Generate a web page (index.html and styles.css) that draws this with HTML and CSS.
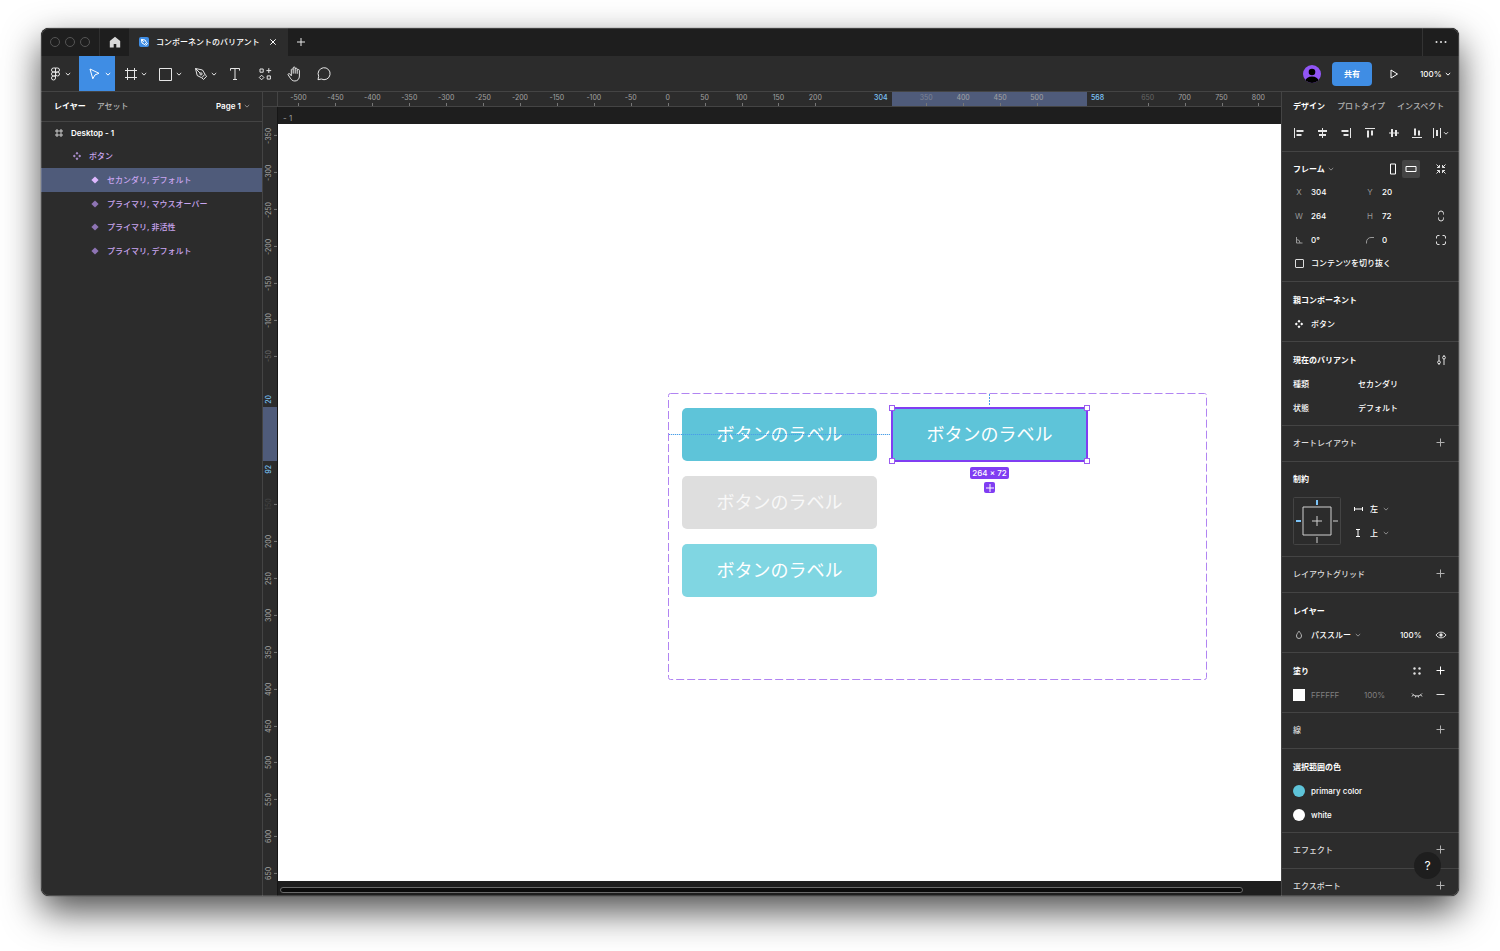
FILE: index.html
```html
<!DOCTYPE html>
<html lang="ja">
<head>
<meta charset="utf-8">
<title>コンポーネントのバリアント</title>
<link rel="stylesheet" href="styles.css">
</head>
<body>
<svg class="sprite" aria-hidden="true">
  <symbol id="chev" viewBox="0 0 6 6"><path d="M.8 2 3 4.1 5.2 2"/></symbol>
  <symbol id="plus" viewBox="0 0 12 12"><path d="M5.500 1.500v8M1.500 5.500h8"/></symbol>
  <symbol id="minus" viewBox="0 0 12 12"><path d="M1.500 5.500h8"/></symbol>
  <symbol id="hash" viewBox="0 0 12 12"><path d="M4 2v8M8 2v8M2 4h8M2 8h8"/></symbol>
  <symbol id="comp" viewBox="0 0 12 12"><path class="solid" d="M6 1.8 7.5 3.3 6 4.8 4.5 3.3zM6 7.2 7.5 8.7 6 10.2 4.5 8.7zM3.3 4.5 4.8 6 3.3 7.5 1.8 6zM8.7 4.5 10.2 6 8.7 7.5 7.2 6z"/></symbol>
  <symbol id="diamond" viewBox="0 0 12 12"><path class="solid" d="M6 2.4 9.6 6 6 9.6 2.4 6z"/></symbol>
</svg>

<main class="window">
  <header class="titlebar">
    <div class="lights"><i></i><i></i><i></i></div>
    <button class="home" aria-label="ホーム"><svg class="icon12" viewBox="0 0 12 12"><path class="solid" d="M6 .8 11.2 5v6.4H7.3V8H4.7v3.4H.8V5z"/></svg></button>
    <div class="doc-tab">
      <svg class="icon10" viewBox="0 0 10 10"><rect class="doc-bg" width="10" height="10" rx="2"/><path d="M2.4 2.4 6 3 7.5 5.6 5.6 7.5 3 6zM2.4 2.4l2.4 2.4M7.5 5.6l1 1-1.8 1.8-1-1"/></svg>
      <span class="doc-name">コンポーネントのバリアント</span>
      <button aria-label="閉じる"><svg class="icon8" viewBox="0 0 8 8"><path d="M1.300 1.300l5.400 5.400M6.700 1.300 1.300 6.700"/></svg></button>
    </div>
    <button class="new-tab" aria-label="新規タブ"><svg class="icon12" viewBox="0 0 12 12"><path d="M6 2v8M2 6h8"/></svg></button>
    <button class="more" aria-label="その他"><svg class="icon12" viewBox="0 0 12 12"><g class="solid"><circle cx="1.5" cy="6" r="1"/><circle cx="6" cy="6" r="1"/><circle cx="10.5" cy="6" r="1"/></g></svg></button>
  </header>

  <nav class="toolbar">
    <button class="tool tool--menu" aria-label="メニュー"><svg class="icon18" viewBox="0 0 18 18"><path d="M9.500 3H7.500a2 2 0 0 0 0 4h2zM9.500 3h2a2 2 0 0 1 0 4h-2zM9.500 7h-2a2 2 0 0 0 0 4h2zM9.500 11h-2a2 2 0 1 0 2 2z"/><circle cx="11.500" cy="9" r="2"/></svg><svg class="chev"><use href="#chev"/></svg></button>
    <button class="tool tool--active" aria-label="移動"><svg class="icon18" viewBox="0 0 18 18"><path d="M4 4 13 8.300 9 9.900 6.800 13.800z"/></svg><svg class="chev"><use href="#chev"/></svg></button>
    <button class="tool" aria-label="フレーム"><svg class="icon18" viewBox="0 0 18 18"><path d="M5.500 3v12M12.500 3v12M3 5.500h12M3 12.500h12"/></svg><svg class="chev"><use href="#chev"/></svg></button>
    <button class="tool" aria-label="長方形"><svg class="icon18" viewBox="0 0 18 18"><path d="M2.500 3.500h12v12h-12z"/></svg><svg class="chev"><use href="#chev"/></svg></button>
    <button class="tool" aria-label="ペン"><svg class="icon18" viewBox="0 0 18 18"><path d="M3.5 3.5 10.5 5 13 9.2 9.7 12.8 5.2 10.5zM3.5 3.5l4.7 4.7M13 9.6l1.700 1.600-3.200 3.300-1.700-1.700"/><circle cx="9" cy="8.900" r="1.100"/></svg><svg class="chev"><use href="#chev"/></svg></button>
    <button class="tool tool--single" aria-label="テキスト"><svg class="icon18" viewBox="0 0 18 18"><path d="M4.500 5.600V3.500h9v2.100M9 3.500v11M7 14.500h4"/></svg></button>
    <button class="tool tool--single" aria-label="リソース"><svg class="icon18" viewBox="0 0 18 18"><path d="M4 4h3.200v3.200H4zM12.800 3.200V8M10.400 5.600h4.800M11.200 10.900h3.200v3.200h-3.200zM5.600 10.200 7.900 12.500 5.600 14.800 3.300 12.500z"/></svg></button>
    <button class="tool tool--single" aria-label="手のひら"><svg class="icon18" viewBox="0 0 18 18"><path d="M5.300 10V4.600a1 1 0 0 1 1.900 0V3a1 1 0 0 1 2 0v1.200a1 1 0 0 1 2 0v1.400a1.100 1.100 0 0 1 2.200 0V11c0 3-1.900 5-4.500 5-2.400 0-3.500-1.200-4.600-2.900L2.100 9.800c-.4-.9.900-1.700 1.700-.9l1.500 1.900zM7.200 4.600v4M9.200 4.200v4.400M11.200 5.600v3.200"/></svg></button>
    <button class="tool tool--single" aria-label="コメント"><svg class="icon18" viewBox="0 0 18 18"><path d="M2 14.700 2.700 11.300A6 6 0 1 1 5.300 14z"/></svg></button>
    <div class="toolbar-end">
      <svg class="avatar" viewBox="0 0 18 18"><defs><clipPath id="round"><circle cx="9" cy="9" r="9"/></clipPath></defs><g clip-path="url(#round)"><path class="av-bg" d="M0 0h18v18H0z"/><circle cx="9" cy="7" r="3.300"/><ellipse cx="9" cy="16.500" rx="6.800" ry="5"/></g></svg>
      <button class="share">共有</button>
      <button class="play" aria-label="再生"><svg class="icon12" viewBox="0 0 12 12"><path d="M3 2 9.500 6 3 10z"/></svg></button>
      <label class="drop"><select aria-label="ズーム"><option>100%</option></select><svg class="chev"><use href="#chev"/></svg></label>
    </div>
  </nav>

  <div class="workspace">
    <aside class="left">
      <div class="left-head">
        <button class="tab tab--on">レイヤー</button>
        <button class="tab">アセット</button>
        <label class="drop page"><select aria-label="ページ"><option>Page 1</option></select><svg class="chev dim"><use href="#chev"/></svg></label>
      </div>
      <ul class="layers">
        <li class="layer layer--top"><svg class="icon12"><use href="#hash"/></svg>Desktop - 1</li>
        <li class="layer layer--one"><svg class="icon12"><use href="#comp"/></svg>ボタン</li>
        <li class="layer layer--two layer--on"><svg class="icon12"><use href="#diamond"/></svg>セカンダリ, デフォルト</li>
        <li class="layer layer--two"><svg class="icon12"><use href="#diamond"/></svg>プライマリ, マウスオーバー</li>
        <li class="layer layer--two"><svg class="icon12"><use href="#diamond"/></svg>プライマリ, 非活性</li>
        <li class="layer layer--two"><svg class="icon12"><use href="#diamond"/></svg>プライマリ, デフォルト</li>
      </ul>
    </aside>

    <section class="stage">
      <div class="corner"></div>
      <div class="ruler-x">
        <span class="range-x"></span>
        <b class="mark mark--l">304</b><b class="mark mark--r">568</b>
        <span>-500</span><span>-450</span><span>-400</span><span>-350</span><span>-300</span><span>-250</span><span>-200</span><span>-150</span><span>-100</span><span>-50</span><span>0</span><span>50</span><span>100</span><span>150</span><span>200</span><span class="off"></span><span class="off"></span><span class="over">350</span><span>400</span><span>450</span><span>500</span><span class="off"></span><span class="off"></span><span class="faint">650</span><span>700</span><span>750</span><span>800</span>
      </div>
      <div class="ruler-y">
        <span class="range-y"></span>
        <b class="mark mark--t">20</b><b class="mark mark--b">92</b>
        <span>-350</span><span>-300</span><span>-250</span><span>-200</span><span>-150</span><span>-100</span><span class="faint">-50</span><span class="off"></span><span class="off"></span><span class="off"></span><span class="ghost">150</span><span>200</span><span>250</span><span>300</span><span>350</span><span>400</span><span>450</span><span>500</span><span>550</span><span>600</span><span>650</span>
      </div>
      <div class="canvas">
        <div class="frame-name">- 1</div>
        <div class="artboard">
          <svg class="set"><rect x=".5" y=".5" width="538" height="286" rx="2"/></svg>
          <div class="node node--a">ボタンのラベル</div>
          <div class="node node--b">ボタンのラベル</div>
          <div class="node node--c">ボタンのラベル</div>
          <div class="node node--d">ボタンのラベル<i class="grip grip--1"></i><i class="grip grip--2"></i><i class="grip grip--3"></i><i class="grip grip--4"></i></div>
          <i class="guide guide--h"></i><i class="guide guide--v"></i>
          <span class="size">264 × 72</span>
          <button class="add" aria-label="バリアントを追加"><svg class="icon12" viewBox="0 0 12 12"><path d="M6 2v8M2 6h8"/></svg></button>
        </div>
        <div class="scroll"><i></i></div>
      </div>
    </section>

    <aside class="right">
      <div class="head">
        <div class="tabs"><button class="tab tab--on">デザイン</button><button class="tab">プロトタイプ</button><button class="tab">インスペクト</button></div>
        <div class="aligns">
          <button aria-label="左揃え"><svg class="icon12" viewBox="0 0 12 12"><path d="M1.500 1v10"/><path class="thick" d="M3.500 4h7M3.500 8h5"/></svg></button>
          <button aria-label="水平中央"><svg class="icon12" viewBox="0 0 12 12"><path d="M5.500 1v10"/><path class="thick" d="M1 4h9M2 8h7"/></svg></button>
          <button aria-label="右揃え"><svg class="icon12" viewBox="0 0 12 12"><path d="M10.500 1v10"/><path class="thick" d="M1.500 4h7M3.500 8h5"/></svg></button>
          <button aria-label="上揃え"><svg class="icon12" viewBox="0 0 12 12"><path d="M1 1.500h10"/><path class="thick" d="M4 3.500v7M8 3.500v5"/></svg></button>
          <button aria-label="垂直中央"><svg class="icon12" viewBox="0 0 12 12"><path d="M1 6h10"/><path class="thick" d="M4 2v8M8 3v6"/></svg></button>
          <button aria-label="下揃え"><svg class="icon12" viewBox="0 0 12 12"><path d="M1 10.500h10"/><path class="thick" d="M4 1.500v7M8 3.500v5"/></svg></button>
          <button aria-label="等間隔"><svg class="icon18" viewBox="0 0 18 18"><path d="M1.500 4v10M8.500 4v10M12 8.200l2 2 2-2"/><path class="thick" d="M5 6v6"/></svg></button>
        </div>
      </div>

      <div class="sec sec--frame">
        <div class="row"><label class="drop title"><select aria-label="種類"><option>フレーム</option></select><svg class="chev dim"><use href="#chev"/></svg></label>
          <span class="orient"><button aria-label="縦"><svg class="icon12" viewBox="0 0 12 12"><path d="M3.500 1h5v10h-5z"/></svg></button><button class="pressed" aria-label="横"><svg class="icon12" viewBox="0 0 12 12"><path d="M1 3.500h10v5H1z"/></svg></button></span>
          <button class="end" aria-label="サイズを合わせる"><svg class="icon12" viewBox="0 0 12 12"><path d="M1.500 1.500 4.500 4.500M4.500 2v2.500H2M10.500 1.500 7.500 4.500M7.500 2v2.500H10M1.500 10.500 4.500 7.500M2 7.500h2.500V10M10.500 10.500 7.500 7.500M10 7.500H7.500V10"/></svg></button></div>
        <div class="row trio"><label class="field"><span>X</span><input value="304"></label><label class="field"><span>Y</span><input value="20"></label></div>
        <div class="row trio"><label class="field"><span>W</span><input value="264"></label><label class="field"><span>H</span><input value="72"></label><button class="end" aria-label="縦横比を固定"><svg class="icon12" viewBox="0 0 12 12"><path d="M3.500 4.500V3.500a2.500 2.500 0 0 1 5 0v1M3.500 7.500v1a2.500 2.500 0 0 0 5 0v-1"/></svg></button></div>
        <div class="row trio"><label class="field" aria-label="回転"><svg class="icon12 grey" viewBox="0 0 12 12"><path d="M3.500 3v6H9.500M3.500 5.500A3.500 3.500 0 0 1 7 9"/></svg><input value="0°"></label><label class="field" aria-label="角の半径"><svg class="icon12 grey" viewBox="0 0 12 12"><path d="M2.500 9.500V8A4.500 4.500 0 0 1 7 3.500h3"/></svg><input value="0"></label><button class="end" aria-label="個別の角"><svg class="icon12" viewBox="0 0 12 12"><path d="M1.500 4.500V3A1.500 1.500 0 0 1 3 1.500h1.500M7.500 1.500H9A1.500 1.500 0 0 1 10.500 3v1.500M10.500 7.500V9A1.500 1.500 0 0 1 9 10.500H7.500M4.500 10.500H3A1.500 1.500 0 0 1 1.500 9V7.500"/></svg></button></div>
        <label class="row check"><input type="checkbox">コンテンツを切り抜く</label>
      </div>

      <div class="sec"><h2 class="row">親コンポーネント</h2><div class="row lead"><svg class="icon12"><use href="#comp"/></svg>ボタン</div></div>

      <div class="sec">
        <div class="row"><h2>現在のバリアント</h2><button class="end" aria-label="バリアント設定"><svg class="icon12" viewBox="0 0 12 12"><path d="M4 1v6M4 9.800V11M9 1v1.200M9 5v6"/><circle cx="4" cy="8.300" r="1.400"/><circle cx="9" cy="3.600" r="1.400"/></svg></button></div>
        <label class="row prop"><span>種類</span><select><option>セカンダリ</option></select></label>
        <label class="row prop"><span>状態</span><select><option>デフォルト</option></select></label>
      </div>

      <div class="sec sec--line"><div class="row"><h2 class="soft">オートレイアウト</h2><button class="end" aria-label="追加"><svg class="icon12"><use href="#plus"/></svg></button></div></div>

      <div class="sec sec--cons">
        <h2 class="row">制約</h2>
        <div class="cons">
          <svg class="cons-box" viewBox="0 0 48 48"><rect class="edge" x=".5" y=".5" width="47" height="47" rx="1"/><path d="M10 10h28v28H10zM24 19v10M19 24h10M24 40v6M40 24h5"/><path class="blue" d="M24 3v5M3 24h5"/></svg>
          <div class="cons-list">
            <label class="drop"><svg class="icon12" viewBox="0 0 12 12"><path d="M1.500 4v4M9.500 4v4M1.500 6h8"/></svg><select aria-label="水平方向"><option>左</option></select><svg class="chev dim"><use href="#chev"/></svg></label>
            <label class="drop"><svg class="icon12" viewBox="0 0 12 12"><path d="M3 2.500h4M3 9.500h4M5 2.500v7"/></svg><select aria-label="垂直方向"><option>上</option></select><svg class="chev dim"><use href="#chev"/></svg></label>
          </div>
        </div>
      </div>

      <div class="sec sec--line"><div class="row"><h2 class="soft">レイアウトグリッド</h2><button class="end" aria-label="追加"><svg class="icon12"><use href="#plus"/></svg></button></div></div>

      <div class="sec"><h2 class="row">レイヤー</h2>
        <div class="row"><label class="drop lead"><svg class="icon12 pale" viewBox="0 0 12 12"><path d="M6 2.200C7.300 4 8.500 5.300 8.500 7a2.500 2.500 0 0 1-5 0C3.500 5.300 4.700 4 6 2.200z"/></svg><select aria-label="合成モード"><option>パススルー</option></select><svg class="chev dim"><use href="#chev"/></svg></label><span class="push"><input class="opacity" aria-label="不透明度" value="100%"><button class="end" aria-label="表示"><svg class="icon12" viewBox="0 0 12 12"><path d="M1 6c2.500-3.800 7.500-3.800 10 0-2.500 3.800-7.500 3.800-10 0z"/><circle class="solid" cx="6" cy="6" r="1.700"/></svg></button></span></div></div>

      <div class="sec">
        <div class="row"><h2>塗り</h2><span class="push"><button class="end" aria-label="スタイル"><svg class="icon12" viewBox="0 0 12 12"><g class="solid"><circle cx="3.500" cy="3.500" r="1.200"/><circle cx="8.500" cy="3.500" r="1.200"/><circle cx="3.500" cy="8.500" r="1.200"/><circle cx="8.500" cy="8.500" r="1.200"/></g></svg></button><button class="end bright" aria-label="追加"><svg class="icon12"><use href="#plus"/></svg></button></span></div>
        <div class="row muted"><span class="paint"><i class="swatch"></i><input aria-label="色" value="FFFFFF"></span><input class="alpha" aria-label="塗りの不透明度" value="100%"><span class="push"><button class="end" aria-label="非表示"><svg class="icon12" viewBox="0 0 12 12"><path d="M1 4.500c2.500 3.300 7.500 3.300 10 0M2.200 6 1 7.500M4.800 7 4.300 8.500M7.200 7l.5 1.500M9.800 6 11 7.500"/></svg></button><button class="end" aria-label="削除"><svg class="icon12"><use href="#minus"/></svg></button></span></div>
      </div>

      <div class="sec sec--line"><div class="row"><h2 class="soft">線</h2><button class="end" aria-label="追加"><svg class="icon12"><use href="#plus"/></svg></button></div></div>

      <div class="sec"><h2 class="row">選択範囲の色</h2>
        <div class="row lead"><i class="swatch swatch--cyan"></i>primary color</div>
        <div class="row lead"><i class="swatch swatch--round"></i>white</div></div>

      <div class="sec sec--line"><div class="row"><h2 class="soft">エフェクト</h2><button class="end" aria-label="追加"><svg class="icon12"><use href="#plus"/></svg></button></div></div>
      <div class="sec sec--line"><div class="row"><h2 class="soft">エクスポート</h2><button class="end" aria-label="追加"><svg class="icon12"><use href="#plus"/></svg></button></div></div>
      <button class="help" aria-label="ヘルプ">?</button>
    </aside>
  </div>
</main>
</body>
</html>
```

FILE: styles.css
```css
* { box-sizing: border-box; }

body {
  margin: 0;
  height: 100vh;
  padding: 28px 41px 55px;
  display: flex;
  background: #fff;
  overflow: hidden;
  color: #fff;
  font: 500 8px/12px Inter, "Noto Sans CJK JP", sans-serif;
}

button, input, select {
  font: inherit;
  color: inherit;
  background: none;
  border: 0;
  padding: 0;
  margin: 0;
  border-radius: 0;
  appearance: none;
  outline: none;
}
button {
  display: flex;
  align-items: center;
  justify-content: center;
  flex: none;
}
h2 { margin: 0; font: inherit; font-weight: 700; }
ul { margin: 0; padding: 0; list-style: none; }

svg { fill: none; stroke: currentColor; stroke-width: 1; flex: none; display: block; }
.sprite { position: absolute; width: 0; height: 0; }
.solid { fill: currentColor; stroke: none; }
.thick { stroke-width: 2; }
.icon8 { width: 8px; height: 8px; }
.icon10 { width: 10px; height: 10px; }
.icon12 { width: 12px; height: 12px; }
.icon18 { width: 18px; height: 18px; }
.chev { width: 6px; height: 6px; }
.dim { color: #8c8c8c; }
.pale { color: #b8b8b8; }
.drop { display: flex; align-items: center; gap: 3px; }

.window {
  flex: 1;
  min-width: 0;
  display: flex;
  flex-direction: column;
  overflow: hidden;
  border-radius: 8px;
  background: #2c2c2c;
  box-shadow: 0 0 1px #000, 0 15px 37px rgba(0, 0, 0, .7);
  position: relative;
}
.window::after {
  content: "";
  position: absolute;
  inset: 0;
  border: 1px solid rgba(255, 255, 255, .16);
  border-radius: 8px;
  pointer-events: none;
}

/* Title bar */
.titlebar { display: flex; height: 28px; flex: none; background: #1e1e1e; color: #e6e6e6; }
.lights { width: 59px; display: flex; align-items: center; gap: 5px; padding-left: 9px; border-right: 1px solid #2f2f2f; }
.lights i { width: 10px; height: 10px; border: 1px solid #555; border-radius: 50%; }
.home { width: 29px; color: #d8d8d8; }
.doc-tab { display: flex; align-items: center; width: 159px; padding: 0 11px 0 10px; background: #2c2c2c; color: #fff; }
.doc-name { margin-left: 7px; flex: 1; white-space: nowrap; }
.doc-bg { fill: #3f8de4; stroke: none; }
.new-tab { width: 26px; color: #e6e6e6; }
.more { width: 37px; margin-left: auto; border-left: 1px solid #333; }

/* Tool bar */
.toolbar { display: flex; height: 36px; flex: none; border-bottom: 1px solid #444; color: #e6e6e6; }
.tool { width: 35px; justify-content: flex-start; padding-left: 7px; gap: 1px; }
.tool--menu { width: 38px; padding-left: 5px; }
.tool--active { width: 36px; background: #3f8de4; color: #fff; }
.tool--single { width: 30px; padding: 0; justify-content: center; }
.toolbar-end { display: flex; align-items: center; margin-left: auto; padding-right: 8px; color: #fff; }
.avatar { width: 18px; height: 18px; fill: #000; stroke: none; margin-right: 11px; }
.av-bg { fill: #9155f5; }
.share { width: 40px; height: 24px; border-radius: 4px; background: #3f8de4; margin-right: 16px; font-weight: 600; }
.play { margin-right: 20px; }

.workspace { flex: 1; min-height: 0; display: flex; }
.tab { color: #b3b3b3; white-space: nowrap; }
.tab--on { color: #fff; font-weight: 700; }

/* Layers */
.left { width: 222px; flex: none; border-right: 1px solid #444; }
.left-head { display: flex; align-items: center; height: 29px; gap: 11px; padding: 0 12px 1px 13px; box-shadow: 0 1px #444; }
.page { margin-left: auto; font-weight: 600; }
.layers { display: grid; grid-auto-rows: 1fr; height: 142px; }
.layer { display: flex; align-items: center; gap: 6px; color: #c9a5f0; }
.layer .icon12 { color: #8e74b4; }
.layer--top { padding-left: 12px; color: #fff; font-weight: 600; }
.layer--top .icon12 { color: #ccc; }
.layer--one { padding-left: 30px; }
.layer--one .icon12 { color: #a78bc9; }
.layer--two { padding-left: 48px; }
.layer--on { background: #4f5b7a; }
.layer--on .icon12 { color: #dfb8ff; }

/* Rulers and canvas */
.stage { flex: 1; min-width: 0; display: grid; grid-template: 15px 1fr / 15px 1fr; }
.corner { border: solid #444; border-width: 0 1px 1px 0; }
.ruler-x, .ruler-y { display: flex; position: relative; font-size: 7px; line-height: 12px; font-weight: 400; color: #a3a3a3; }
.ruler-x { padding: 0 4px 0 2px; border-bottom: 1px solid #444; }
.ruler-x > span:not([class^="range"]) { flex: 1; text-align: center; position: relative; }
.ruler-x > span:not(.off):not(.range-x)::after {
  content: "";
  position: absolute;
  left: 50%;
  bottom: 0;
  width: 1px;
  height: 3px;
  background: #777;
}
.ruler-y { flex-direction: column; padding: 10px 0 4px; border-right: 1px solid #161616; }
.ruler-y > span:not([class^="range"]) {
  flex: 1;
  writing-mode: vertical-rl;
  transform: rotate(180deg);
  text-align: center;
  position: relative;
  padding-left: 3px;
}
.ruler-y > span:not(.off):not(.range-y)::after {
  content: "";
  position: absolute;
  left: 0;
  top: 50%;
  width: 3px;
  height: 1px;
  background: #777;
}
.ruler-x > .faint, .ruler-y > .faint { color: #666; }
.ruler-x > .over { color: #7d8496; }
.ruler-y > .ghost { color: #444; }
.range-x { position: absolute; left: 614px; top: 0; bottom: 0; width: 195px; background: #4f5b7a; }
.range-y { position: absolute; left: 0; right: 0; top: 300px; height: 54px; background: #4f5b7a; }
.mark { position: absolute; color: #7cc4f8; font-weight: 500; }
.mark--l { left: 596px; }
.mark--r { left: 813px; }
.mark--t, .mark--b { writing-mode: vertical-rl; transform: rotate(180deg); left: 0; }
.mark--t { top: 288px; }
.mark--b { top: 358px; }

.canvas { display: flex; flex-direction: column; min-width: 0; background: #1e1e1e; overflow: hidden; }
.frame-name { height: 17px; flex: none; display: flex; align-items: center; color: #999; font-weight: 400; padding: 5px 0 0 5px; }
.artboard { flex: 1; position: relative; background: #fff; overflow: hidden; }
.scroll { height: 15px; flex: none; padding: 6px 38px 0 2px; }
.scroll i { display: block; height: 6px; border: 1px solid #6a6a6a; border-radius: 3px; background: #0c0c0c; }

.set { position: absolute; left: 390px; top: 269px; width: 539px; height: 287px; stroke: #b184f2; stroke-dasharray: 8 3; }
.node {
  position: absolute;
  width: 195px;
  height: 53px;
  padding-bottom: 4px;
  border-radius: 5px;
  display: flex;
  align-items: center;
  justify-content: center;
  background: #5ec4d9;
  font: 400 18px/24px "Noto Sans CJK JP", sans-serif;
}
.node--a { left: 404px; top: 284px; }
.node--b { left: 404px; top: 352px; background: #dedede; color: #f8f8f8; }
.node--c { left: 404px; top: 420px; background: #80d6e2; }
.node--d { left: 614px; top: 284px; outline: 1px solid #803df2; box-shadow: inset 0 0 0 1px #803df2; border-radius: 3px; }
.grip { position: absolute; width: 6px; height: 6px; border: 1px solid #9a5cf0; background: #fff; }
.grip--1 { left: -3px; top: -3px; }
.grip--2 { right: -3px; top: -3px; }
.grip--3 { left: -3px; bottom: -3px; }
.grip--4 { right: -3px; bottom: -3px; }
.guide { position: absolute; }
.guide--h { left: 391px; top: 310px; width: 221px; height: 1px; background: repeating-linear-gradient(90deg, #4a9fe8 0 1px, #4a9fe840 1px 2px); }
.guide--v { left: 711px; top: 270px; width: 1px; height: 12px; background: repeating-linear-gradient(#4a9fe8 0 2px, transparent 2px 3px); }
.size { position: absolute; left: 692px; top: 343px; width: 39px; text-align: center; border-radius: 2px; background: #803df2; white-space: nowrap; }
.add { position: absolute; left: 706px; top: 358px; width: 11px; height: 11px; border-radius: 2px; background: #803df2; overflow: hidden; }

/* Properties */
.right { width: 178px; flex: none; border-left: 1px solid #444; overflow: hidden; position: relative; }
.head { height: 60px; padding: 0 9px 0 11px; border-bottom: 1px solid #444; }
.tabs { display: flex; height: 28px; gap: 12px; }
.aligns { display: flex; justify-content: space-between; margin-left: -3px; height: 26px; color: #e6e6e6; }
.aligns button { width: 18px; }
.sec { padding: 6px 9px 5px 11px; border-bottom: 1px solid #444; }
.sec--frame { display: grid; grid-auto-rows: 1fr; height: 130px; padding-top: 5px; padding-bottom: 6px; }
.sec--line { padding-top: 5px; padding-bottom: 6px; }
.sec--cons { padding-top: 5px; padding-bottom: 11px; }
.row { display: flex; align-items: center; height: 24px; }
.sec--frame .row { height: auto; min-height: 0; }
.row > .end:last-child { margin-left: auto; }
.end { width: 18px; height: 18px; color: #e0e0e0; }
.sec--line .end { color: #b0b0b0; }
.sec .bright { color: #fff; }
.soft { font-weight: 500; color: #ddd; }
.title { font-weight: 700; }
.orient { display: flex; margin-left: auto; margin-right: 12px; }
.orient button { width: 18px; height: 18px; border-radius: 2px; }
.orient .pressed { background: #444; }
.row > .orient + .end:last-child { margin-left: 0; }
.sec--frame .trio { display: grid; grid-template-columns: 71px 1fr 18px; }
.field { display: flex; align-items: center; gap: 6px; }
.field span { width: 12px; text-align: center; color: #999; font-weight: 400; }
.field input { width: 36px; }
.grey { color: #999; }
.check { gap: 6px; }
.check input { width: 9px; height: 9px; margin: 0 1px 0 2px; border: 1px solid #ddd; border-radius: 1px; }
.lead { gap: 6px; }
.lead .icon12 + select + .chev { margin-left: -2px; }
.prop span { width: 65px; }
.cons { display: flex; gap: 12px; margin-top: 6px; }
.cons-box { width: 48px; height: 48px; color: #d0d0d0; }
.edge { stroke: #444; }
.blue { stroke: #7cc4f8; stroke-width: 2; }
.cons-list .drop { height: 24px; gap: 5px; }
.opacity { width: 26px; }
.push { display: flex; align-items: center; gap: 6px; margin-left: auto; }
.paint { display: flex; align-items: center; gap: 6px; width: 71px; color: #808080; }
.paint input { width: 40px; font-weight: 400; }
.alpha { width: 28px; color: #808080; font-weight: 400; }
.swatch { width: 12px; height: 12px; background: #fff; flex: none; }
.swatch--round, .swatch--cyan { border-radius: 50%; }
.swatch--cyan { background: #5ec4d9; }
.help { position: absolute; right: 18px; bottom: 17px; width: 27px; height: 27px; border-radius: 50%; background: #1e1e1e; font-size: 12px; font-weight: 400; }
```
